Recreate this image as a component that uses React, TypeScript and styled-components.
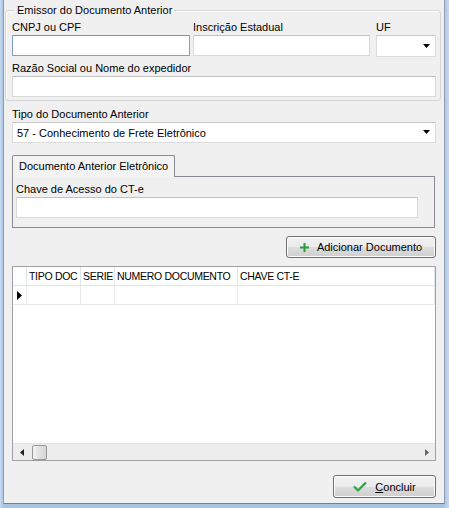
import React from 'react';
import styled, { createGlobalStyle } from 'styled-components';

const GlobalStyle = createGlobalStyle`
  html, body {
    margin: 0;
    padding: 0;
    background: #b9d1ea;
  }
  body {
    font-family: "Liberation Sans", Arial, sans-serif;
    font-size: 11px;
    color: #000;
  }
`;

const Frame = styled.div`
  width: 449px;
  height: 508px;
  box-sizing: border-box;
  padding: 0 4px 4px 3px;
  background: linear-gradient(90deg, #c7daee 0px, #a9c4e3 3px, #a9c4e3 calc(100% - 5px), #c7daee 100%);
`;

const Window = styled.div`
  height: 504px;
  box-sizing: border-box;
  background: #f0f0f0;
  border-left: 1px solid #8c9db3;
  border-right: 1px solid #8c9db3;
  border-bottom: 1px solid #6f8299;
  padding: 0 8px 0 8px;
  display: flex;
  flex-direction: column;
`;

const GroupBox = styled.fieldset`
  margin: 3px -5px 0 -7px;
  padding: 2px 4px 3px 6px;
  border: 1px solid #d5d5d5;
  box-shadow: inset 1px 1px 0 #fff;
  border-radius: 3px;
  min-inline-size: 0;
`;

const Legend = styled.legend`
  padding: 0 2px;
  margin-left: 3px;
  line-height: 15px;
`;

const Row = styled.div`
  display: flex;
`;

const Field = styled.div<{ $width?: number; $ml?: number; $mt?: number }>`
  display: flex;
  flex-direction: column;
  width: ${(p) => (p.$width ? `${p.$width}px` : 'auto')};
  margin-left: ${(p) => p.$ml ?? 0}px;
  margin-top: ${(p) => p.$mt ?? 0}px;
`;

const Label = styled.label`
  line-height: 15px;
  height: 15px;
  white-space: nowrap;
`;

const TextBox = styled.div<{ $focused?: boolean; $height?: number }>`
  height: ${(p) => p.$height ?? 21}px;
  box-sizing: border-box;
  background: #fff;
  border: 1px solid ${(p) => (p.$focused ? '#7da2ce' : '#d9d9d9')};
  border-top-color: ${(p) => (p.$focused ? '#569de5' : '#c2c2c2')};
  border-radius: 1px;
`;

const Select = styled.div<{ $height?: number }>`
  height: ${(p) => p.$height ?? 21}px;
  box-sizing: border-box;
  background: #fff;
  border: 1px solid #dcdcdc;
  border-top-color: #c8c8c8;
  display: flex;
  align-items: center;
  justify-content: space-between;
  padding: 0 4px 0 4px;
  white-space: nowrap;
`;

const Arrow = () => (
  <svg width="8" height="5" viewBox="0 0 8 5">
    <path d="M0 0h7l-3.5 4z" fill="#000" />
  </svg>
);

const TabArea = styled.div`
  margin-top: 12px;
  display: flex;
  flex-direction: column;
  width: 423px;
`;

const TabHeader = styled.div`
  align-self: flex-start;
  width: 163px;
  height: 22px;
  box-sizing: border-box;
  padding: 0 0 0 6px;
  line-height: 21px;
  border: 1px solid #898c95;
  border-bottom: none;
  border-radius: 2px 2px 0 0;
  background: #f3f3f3;
  margin-bottom: -1px;
  position: relative;
  z-index: 1;
`;

const TabPanel = styled.div`
  border: 1px solid #898c95;
  height: 52px;
  box-sizing: border-box;
  padding: 5px 0 0 3px;
  background: #f0f0f0;
`;

const Button = styled.button<{ $width: number; $height: number; $mt: number }>`
  align-self: flex-end;
  width: ${(p) => p.$width}px;
  height: ${(p) => p.$height}px;
  margin-top: ${(p) => p.$mt}px;
  box-sizing: border-box;
  border: 1px solid #707070;
  border-radius: 3px;
  background: linear-gradient(#f2f2f2 0%, #ebebeb 50%, #dddddd 51%, #cfcfcf 100%);
  box-shadow: inset 0 0 0 1px #fcfcfc;
  font: inherit;
  color: #000;
  display: flex;
  align-items: center;
  justify-content: center;
  gap: 8px;
  padding: 0;
`;

const Underline = styled.span`
  text-decoration: underline;
`;

const Grid = styled.div`
  margin-top: 8px;
  height: 195px;
  box-sizing: border-box;
  border: 1px solid #a0a0a0;
  background: #fff;
  display: flex;
  flex-direction: column;
`;

const GridRow = styled.div<{ $header?: boolean }>`
  display: flex;
  height: 18px;
  border-bottom: 1px solid ${(p) => (p.$header ? '#e3e3e3' : '#eaeaea')};
  width: 422px;
`;

const Cell = styled.div<{ $width?: number; $header?: boolean }>`
  width: ${(p) => (p.$width ? `${p.$width}px` : 'auto')};
  flex: ${(p) => (p.$width ? 'none' : '1')};
  box-sizing: border-box;
  border-right: 1px solid ${(p) => (p.$header ? '#dde6ee' : '#eaeaea')};
  padding-left: 2px;
  font-size: ${(p) => (p.$header ? '10.5px' : '11px')};
  letter-spacing: ${(p) => (p.$header ? '-0.3px' : '0')};
  line-height: 18px;
  white-space: nowrap;
  overflow: hidden;
  display: flex;
  align-items: center;
`;

const MarkerCell = styled(Cell)`
  padding-left: 4px;
`;

const GridBody = styled.div`
  flex: 1;
`;

const HScroll = styled.div`
  height: 16px;
  background: #ededed;
  border-top: 1px solid #e4e4e4;
  display: flex;
  align-items: center;
  padding: 0 6px 0 7px;
  gap: 8px;
`;

const Thumb = styled.div`
  width: 15px;
  height: 15px;
  box-sizing: border-box;
  border: 1px solid #979797;
  border-radius: 2px;
  background: linear-gradient(90deg, #f3f3f3, #e2e2e2 50%, #d6d6d6);
`;

const Spacer = styled.div`
  flex: 1;
`;

const ScrollArrow = ({ dir }: { dir: 'left' | 'right' }) => (
  <svg width="4" height="7" viewBox="0 0 4 7">
    <path d={dir === 'left' ? 'M4 0v7L0 3.5z' : 'M0 0v7l4-3.5z'} fill={dir === 'left' ? '#222' : '#666'} />
  </svg>
);

const PlusIcon = () => (
  <svg width="9" height="9" viewBox="0 0 9 9">
    <path d="M3.5 0h2v3.5H9v2H5.5V9h-2V5.5H0v-2h3.5z" fill="#2e9a3a" />
  </svg>
);

const CheckIcon = () => (
  <svg width="14" height="11" viewBox="0 0 14 11">
    <path d="M1 5.5l4 4 8-8" fill="none" stroke="#2ea843" strokeWidth="2.4" strokeLinejoin="round" />
  </svg>
);

const RowMarker = () => (
  <svg width="5" height="9" viewBox="0 0 5 9">
    <path d="M0 0v9l5-4.5z" fill="#000" />
  </svg>
);

const columns = [
  { title: 'TIPO DOC', width: 54 },
  { title: 'SERIE', width: 34 },
  { title: 'NUMERO DOCUMENTO', width: 123 },
  { title: 'CHAVE CT-E' },
];

export default function App() {
  return (
    <Frame>
      <GlobalStyle />
      <Window>
        <GroupBox>
          <Legend>Emissor do Documento Anterior</Legend>
          <Row>
            <Field $width={178}>
              <Label>CNPJ ou CPF</Label>
              <TextBox $focused />
            </Field>
            <Field $width={177} $ml={3}>
              <Label>Inscrição Estadual</Label>
              <TextBox />
            </Field>
            <Field $width={60} $ml={6}>
              <Label>UF</Label>
              <Select $height={22}>
                <span />
                <Arrow />
              </Select>
            </Field>
          </Row>
          <Field $mt={4}>
            <Label>Razão Social ou Nome do expedidor</Label>
            <TextBox />
          </Field>
        </GroupBox>

        <Field $mt={6}>
          <Label>Tipo do Documento Anterior</Label>
          <Select>
            <span>57 - Conhecimento de Frete Eletrônico</span>
            <Arrow />
          </Select>
        </Field>

        <TabArea>
          <TabHeader>Documento Anterior Eletrônico</TabHeader>
          <TabPanel>
            <Field $width={402}>
              <Label>Chave de Acesso do CT-e</Label>
              <TextBox />
            </Field>
          </TabPanel>
        </TabArea>

        <Button $width={150} $height={22} $mt={8}>
          <PlusIcon />
          <span>Adicionar Documento</span>
        </Button>

        <Grid>
          <GridRow $header>
            <Cell $width={14} $header />
            {columns.map((c) => (
              <Cell key={c.title} $width={c.width} $header>
                {c.title}
              </Cell>
            ))}
          </GridRow>
          <GridRow>
            <MarkerCell $width={14}>
              <RowMarker />
            </MarkerCell>
            {columns.map((c) => (
              <Cell key={c.title} $width={c.width} />
            ))}
          </GridRow>
          <GridBody />
          <HScroll>
            <ScrollArrow dir="left" />
            <Thumb />
            <Spacer />
            <ScrollArrow dir="right" />
          </HScroll>
        </Grid>

        <Button $width={103} $height={23} $mt={14}>
          <CheckIcon />
          <span>
            <Underline>C</Underline>oncluir
          </span>
        </Button>
      </Window>
    </Frame>
  );
}
